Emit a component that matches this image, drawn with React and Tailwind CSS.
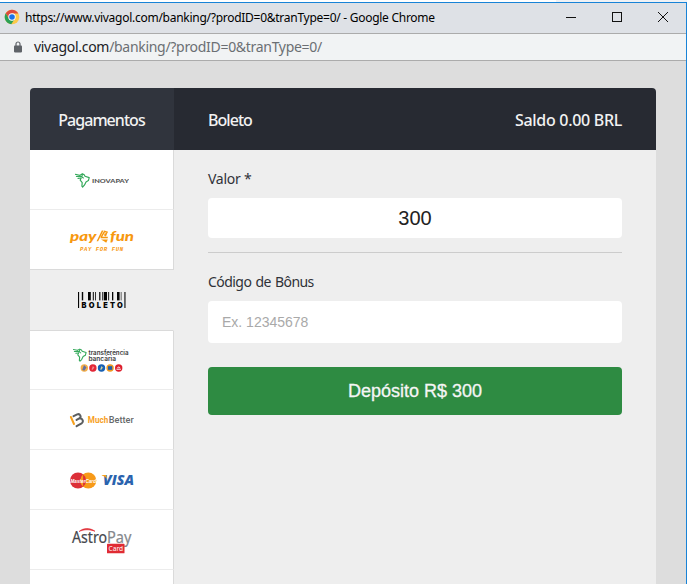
const uiFont = "font-['Noto_Sans','Open_Sans',sans-serif]";
const arialFont = "font-['Liberation_Sans',Arial,sans-serif]";

function ChromeIcon() {
  return (
    <svg width="16" height="16" viewBox="0 0 16 16">
      <circle cx="8" cy="8" r="7.3" fill="#fbc94a" />
      <path d="M1.7 4.3A7.3 7.3 0 0 1 14.3 4.4H8L4.9 9.8Z" fill="#dd4b3e" />
      <path d="M1.7 4.3A7.3 7.3 0 0 0 7.2 15.3L10.9 9.8 8 11.6 4.9 9.8Z" fill="#2aa056" />
      <circle cx="8" cy="8" r="3.7" fill="#fff" />
      <circle cx="8" cy="8" r="2.8" fill="#1a73e8" />
    </svg>
  );
}

function LockIcon() {
  return (
    <svg width="8" height="12" viewBox="0 0 8 12">
      <path d="M2 5V3a2 2 0 0 1 4 0v2" fill="none" stroke="#5f6368" strokeWidth="1.2" />
      <rect x="0" y="4.4" width="8" height="7" rx="0.8" fill="#5f6368" />
    </svg>
  );
}

function WindowButtons() {
  return (
    <svg width="102" height="12" viewBox="0 0 102 12" className="mr-[18px] -mt-[3px]" fill="none" stroke="#111" shapeRendering="crispEdges">
      <path d="M0 6.5h10" />
      <rect x="46.5" y="1.5" width="9" height="9" />
      <path d="M92 1l10 10M102 1l-10 10" shapeRendering="auto" />
    </svg>
  );
}

function ContinentMark() {
  return (
    <g fill="none" stroke="#35a95b" strokeLinejoin="round" strokeLinecap="round">
      <path d="M5 2.2 7.4.9 9.2 1.8 10 3.2 14.2 4.6 13.4 7.6 11 9 9.4 12.2 7.6 14 6.9 13.2 7.2 9.6 5.2 7.2 6 5" strokeWidth="1.2" />
      <path d="M0.5 1.4 4.6 2.2M1.4 3.5 6 3.4 8.4 5M3 5.4 6 5M7.4 1.2 7 3.4" strokeWidth="1.1" />
    </g>
  );
}

function InovapayLogo() {
  return (
    <svg width="55" height="15" viewBox="0 0 55 15">
      <g transform="translate(1 0)">
        <ContinentMark />
      </g>
      <text x="18" y="10.2" fontSize="6.4" fontWeight="900" fill="#555" textLength="37" lengthAdjust="spacingAndGlyphs" className="font-['Lato',sans-serif]">INOVAPAY</text>
    </svg>
  );
}

function PayForFunLogo() {
  return (
    <svg width="65" height="25" viewBox="0 0 65 25" fill="#f7980f" fontStyle="italic">
      <g fontSize="14" fontWeight="900" className="font-['Lato',sans-serif]">
        <text x="1" y="13.2" textLength="26.5" lengthAdjust="spacingAndGlyphs">pay</text>
        <text x="41" y="13.2" textLength="24" lengthAdjust="spacingAndGlyphs">fun</text>
      </g>
      <path d="M27.6 13.2 32.8 2.4h1.7l-5.4 10.8Z" />
      <path d="M32 9.3 35.6 3.4 38 4.2 35.8 8.2M31.6 9.6h7.2M35.4 6.2l2.2.8" fill="none" stroke="#f7980f" strokeWidth="1.5" />
      <path d="M32 11.6h6.8l-1.6 3.2-1.8-1.4Z" />
      <text x="11" y="23.4" fontSize="5.6" fontWeight="700" textLength="43" className="font-['Liberation_Mono',monospace]">PAY FOR FUN</text>
    </svg>
  );
}

function BoletoLogo() {
  const bars = [
    [4.8, 1.4], [11, 2.8], [15.8, 1], [18, 0.8], [22.2, 1.2], [25.3, 1], [27, 3], [31.2, 0.9], [35, 1.3], [40, 2.6], [43.8, 0.6],
  ];

  return (
    <svg width="49" height="16" viewBox="0 0 49 16" fill="#050505" className="overflow-visible">
      <rect x="1" y="0" width="1.1" height="16" />
      <rect x="47.4" y="0" width="1.1" height="16" />
      {bars.map(([x, width]) => (
        <rect key={x} x={x} y="0" width={width} height="8.4" />
      ))}
      <text x="4.4" y="15.6" fontSize="7.4" fontWeight="900" textLength="41.4" className="font-['Inter',sans-serif]">BOLETO</text>
    </svg>
  );
}

function TransferLogo() {
  const banks = [
    ['#f4ae48', '#6470a0'],
    ['#e32636', '#f28d93'],
    ['#1760b4', '#d6d59a'],
    ['#f09a1f', '#1f5ea8'],
    ['#dd1f2d', '#fff'],
  ];

  return (
    <svg width="57" height="26" viewBox="0 0 57 26">
      <g transform="translate(0 1.3) scale(.92)">
        <ContinentMark />
      </g>
      <g fontSize="6.2" fontWeight="600" fill="#3a3a3a" className="font-['Inter',sans-serif]">
        <text x="15.5" y="7.8" textLength="40" lengthAdjust="spacingAndGlyphs">transferência</text>
        <text x="15.5" y="13.6" textLength="27.5" lengthAdjust="spacingAndGlyphs">bancária</text>
      </g>
      {banks.map(([color, mark], index) => (
        <g key={color} transform={`translate(${11.3 + index * 8.6} 21)`}>
          <circle r="3.7" fill={color} />
          {index === 4 ? (
            <path d="M-2.2 1.2h4.4M-1.3 0a1.4 1.4 0 0 1 2.6 0" stroke={mark} strokeWidth="1" fill="none" />
          ) : index === 3 ? (
            <rect x="-2.1" y="-1.8" width="4.2" height="3.6" fill={mark} />
          ) : (
            <path d="M-1.2 1.4 0-1.7 1.3-.4-.3 1.8Z" fill={mark} stroke={mark} strokeWidth={index === 0 ? 1.4 : 0.2} />
          )}
        </g>
      ))}
    </svg>
  );
}

function MuchBetterLogo() {
  return (
    <svg width="65" height="15" viewBox="0 0 65 15">
      <path d="M1.9 4 5 11" stroke="#f7a01c" strokeWidth="2" strokeLinecap="round" fill="none" />
      <path d="M4.6 3.2 8.2 1.4C11 .2 12.9 3.9 10.3 5.4L7.6 6.9M10.6 5.6C13.6 5 15 8.8 12.6 10.3L7.6 13.2" stroke="#5b5e60" strokeWidth="2" strokeLinecap="round" fill="none" />
      <g fontSize="9" className="font-['Roboto',sans-serif]">
        <text x="18.8" y="10.2" fontWeight="700" fill="#f7a01c" textLength="20.4" lengthAdjust="spacingAndGlyphs">Much</text>
        <text x="39.8" y="10.2" fontWeight="500" fill="#66696b" textLength="24.8" lengthAdjust="spacingAndGlyphs">Better</text>
      </g>
    </svg>
  );
}

function CardsLogo() {
  return (
    <svg width="65" height="17" viewBox="0 0 65 17">
      <circle cx="9" cy="8.5" r="8" fill="#dc2f38" />
      <circle cx="19.3" cy="8.5" r="8" fill="#f79a18" />
      <path d="M14.1 2.3a8 8 0 0 1 0 12.4" fill="#dc2f38" />
      <text x="1.5" y="10.7" fontSize="6" fontWeight="700" fontStyle="italic" fill="#fff" textLength="25.5" lengthAdjust="spacingAndGlyphs" className="font-['Liberation_Sans',sans-serif]">MasterCard</text>
      <text x="34" y="13.2" fontSize="14" fontWeight="800" fontStyle="italic" fill="#2a63ae" textLength="31" lengthAdjust="spacingAndGlyphs" className="font-['Open_Sans',sans-serif]">VISA</text>
      <path d="M32.8 3.1h4.4l.9 3.8c-1.4-1.8-3-2.9-5.3-3.4Z" fill="#f7a11a" />
    </svg>
  );
}

function AstroPayLogo() {
  return (
    <svg width="61" height="27" viewBox="0 0 61 27">
      <g className="font-['Noto_Sans',sans-serif]">
        <text x="1" y="15.8" fontSize="15.6" fill="#44464c" stroke="#44464c" strokeWidth="0.2" textLength="35" lengthAdjust="spacingAndGlyphs">Astro</text>
        <text x="36" y="15.8" fontSize="15.6" fill="#85888c" stroke="#85888c" strokeWidth="0.2" textLength="24.4" lengthAdjust="spacingAndGlyphs">Pay</text>
        <path d="M8 4.6C12 .8 19 .4 24 4.3 19 2.3 13 2.1 8 4.6Z" fill="#df2931" stroke="#df2931" strokeWidth="0.6" />
        <rect x="36" y="16.8" width="17.5" height="9.5" rx="0.6" fill="#e02b33" />
        <text x="37.6" y="24.4" fontSize="7.8" fill="#fff" textLength="14.4" lengthAdjust="spacingAndGlyphs">Card</text>
      </g>
    </svg>
  );
}

const paymentMethods = [
  { id: 'inovapay', Logo: InovapayLogo, rowClass: 'h-[60px] pt-px border-[#ececec] bg-white' },
  { id: 'pay4fun', Logo: PayForFunLogo, rowClass: 'h-[60px] pt-px border-[#dadada] bg-white' },
  { id: 'boleto', Logo: BoletoLogo, rowClass: 'h-[61px] border-[#dadada] border-r-[#eee] bg-[#eee]' },
  { id: 'transferencia', Logo: TransferLogo, rowClass: 'h-[59px] border-[#ececec] bg-white' },
  { id: 'muchbetter', Logo: MuchBetterLogo, rowClass: 'h-[60px] pt-[2px] border-[#ececec] bg-white' },
  { id: 'cards', Logo: CardsLogo, rowClass: 'h-[60px] pt-px border-[#ececec] bg-white' },
  { id: 'astropay', Logo: AstroPayLogo, rowClass: 'h-[60px] pt-px border-[#ececec] bg-white' },
  { id: 'next', Logo: null, rowClass: 'h-[60px] border-[#ececec] bg-white' },
];

export default function App() {
  return (
    <div className={`flex h-[584px] w-[687px] flex-col overflow-hidden bg-[#ddd] ${uiFont}`}>
      <div className="flex h-[2px] flex-none bg-[#f0f2f5]">
        <div className="w-[556px] bg-white" />
      </div>

      <div className="flex min-h-0 flex-1 flex-col border-t border-r border-[#1883d7]">
        <header className="flex h-[31px] flex-none items-center border-b border-[#ababab] bg-[#dee1e6]">
          <span className="-mt-[2px] ml-[4px]"><ChromeIcon /></span>
          <h1 className="ml-[5px] flex-1 whitespace-nowrap text-[12px] leading-[16px] tracking-[-0.27px] text-black">
            https://www.vivagol.com/banking/?prodID=0&amp;tranType=0/ - Google Chrome
          </h1>
          <WindowButtons />
        </header>

        <div className="flex h-[27px] flex-none items-center border-b border-[#ababab] bg-[#f1f3f4]">
          <span className="ml-[14px]"><LockIcon /></span>
          <span className="ml-[12px] whitespace-nowrap text-[14px] leading-[20px] tracking-[-0.3px] text-[#202124]">
            vivagol.com<span className="text-[#6b6f73]">/banking/?prodID=0&amp;tranType=0/</span>
          </span>
        </div>

        <main className="flex min-h-0 flex-1 bg-[#ddd] pt-[27px] pr-[30px] pl-[30px]">
          <div className="flex min-h-0 flex-1 flex-col overflow-hidden rounded-t-[4px] bg-[#eee]">
            <div className="flex h-[62px] flex-none text-[16px] font-medium text-[#f2f2f2]">
              <div className="flex w-[144px] items-center justify-center bg-[#30343d] pt-[2px] pr-px tracking-[-0.95px]">Pagamentos</div>
              <div className="flex flex-1 items-center justify-between bg-[#272a32] pt-[2px] pr-[34px] pl-[34px]">
                <span className="tracking-[-0.95px]">Boleto</span>
                <span className="tracking-[-0.3px]">Saldo 0.00 BRL</span>
              </div>
            </div>

            <div className="flex min-h-0 flex-1">
              <nav className="w-[144px] flex-none">
                {paymentMethods.map(({ id, Logo, rowClass }) => (
                  <div key={id} className={`flex items-center justify-center border-r border-b border-r-[#dadada] ${rowClass}`}>
                    {Logo && <Logo />}
                  </div>
                ))}
              </nav>

              <form className="flex flex-1 flex-col px-[34px] pt-[18px] text-[14px] leading-[22px] text-[#303238]">
                <label htmlFor="amount" className="tracking-[-0.25px]">Valor *</label>
                <input
                  id="amount"
                  defaultValue="300"
                  className={`mt-[8px] h-[40px] flex-none rounded-[4px] bg-white text-center text-[20px] text-[#222] ${arialFont}`}
                />
                <div className="mt-[14px] border-t border-[#ccc]" />
                <label htmlFor="bonus" className="mt-[18px] tracking-[-0.55px] [word-spacing:1px]">Código de Bônus</label>
                <input
                  id="bonus"
                  placeholder="Ex. 12345678"
                  className={`mt-[8px] h-[42px] flex-none rounded-[4px] bg-white px-[14px] text-[14px] placeholder:text-[#a9a9a9] ${arialFont}`}
                />
                <button type="button" className={`mt-[24px] h-[48px] flex-none rounded-[4px] bg-[#2e8b42] text-[18px] text-[#f5f5f5] [-webkit-text-stroke:0.3px_#f5f5f5] ${arialFont}`}>
                  Depósito R$ 300
                </button>
              </form>
            </div>
          </div>
        </main>
      </div>
    </div>
  );
}
